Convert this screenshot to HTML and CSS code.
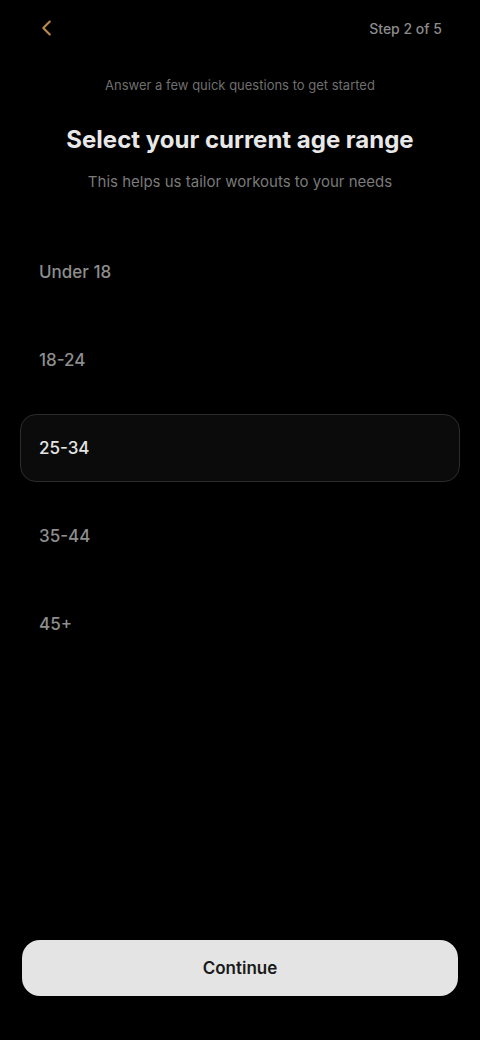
FILE: index.html
```html
<!DOCTYPE html>
<html lang="en">
<head>
<meta charset="utf-8">
<title>Age range</title>
<link rel="stylesheet" href="styles.css">
</head>
<body>
<div class="screen">
  <header class="topbar">
    <button class="back" aria-label="Back">
      <svg width="22" height="22" viewBox="0 0 24 24" fill="none" stroke="currentColor" stroke-width="2.4" stroke-linecap="round" stroke-linejoin="round"><path d="M15 5l-7 7 7 7"/></svg>
    </button>
    <span class="step">Step 2 of 5</span>
  </header>

  <section class="intro">
    <p class="eyebrow">Answer a few quick questions to get started</p>
    <h1 class="title">Select your current age range</h1>
    <p class="subtitle">This helps us tailor workouts to your needs</p>
  </section>

  <ul class="options">
    <li class="option">Under 18</li>
    <li class="option">18-24</li>
    <li class="option selected">25-34</li>
    <li class="option">35-44</li>
    <li class="option">45+</li>
  </ul>

  <div class="footer">
    <button class="cta">Continue</button>
  </div>
</div>
</body>
</html>
```

FILE: styles.css
```css
* { box-sizing: border-box; }
html, body {
  margin: 0;
  padding: 0;
  background: #000;
}
body {
  font-family: Inter, "Noto Sans", "Liberation Sans", sans-serif;
  color: #d8d8d8;
}
.screen {
  width: 480px;
  min-height: 1040px;
  display: flex;
  flex-direction: column;
}
.topbar {
  height: 56px;
  padding: 0 38px 0 36px;
  display: flex;
  align-items: center;
  justify-content: space-between;
}
.back {
  background: none;
  border: 0;
  padding: 0;
  color: #b8874a;
  display: flex;
  align-items: center;
}
.step {
  font-size: 14px;
  font-weight: 500;
  color: #8c8c8c;
}
.intro {
  text-align: center;
  padding: 0 24px;
}
.eyebrow {
  margin: 20px 0 0;
  font-size: 13px;
  line-height: 18px;
  color: #6f6f6f;
}
.title {
  margin: 30px 0 0;
  font-size: 24px;
  line-height: 32px;
  font-weight: 700;
  color: #e8e8e8;
}
.subtitle {
  margin: 16px 0 0;
  font-size: 15px;
  line-height: 20px;
  color: #7a7a7a;
}
.options {
  list-style: none;
  margin: 46px 0 0;
  padding: 0 20px;
  display: flex;
  flex-direction: column;
  gap: 20px;
}
.option {
  height: 68px;
  padding: 0 18px;
  display: flex;
  align-items: center;
  font-size: 17px;
  font-weight: 500;
  color: #8e8e8e;
  border: 1.5px solid transparent;
  border-radius: 16px;
}
.option.selected {
  color: #e6e6e6;
  border-color: #2c2c2c;
  background: #0b0b0b;
}
.footer {
  margin-top: auto;
  padding: 0 22px 44px;
}
.cta {
  width: 100%;
  height: 56px;
  border: 0;
  border-radius: 18px;
  background: #e4e4e4;
  color: #1a1a1a;
  font-family: inherit;
  font-size: 17px;
  font-weight: 600;
}
```
